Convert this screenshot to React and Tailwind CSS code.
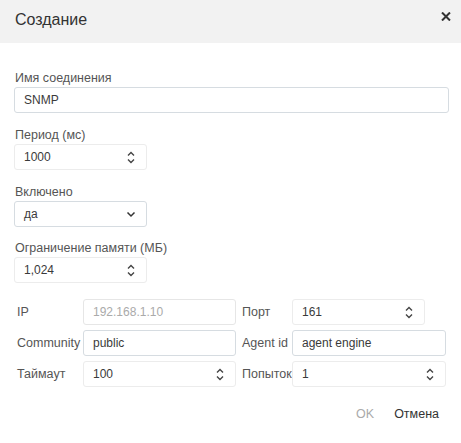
import React from "react";

const Spin = () => (
  <svg width="8" height="15" viewBox="0 0 8 15" className="shrink-0">
    <polyline points="1,5.5 4,2.5 7,5.5" fill="none" stroke="#444" strokeWidth="1.4" />
    <polyline points="1,9.5 4,12.5 7,9.5" fill="none" stroke="#444" strokeWidth="1.4" />
  </svg>
);

const Chevron = () => (
  <svg width="10" height="7" viewBox="0 0 10 7" className="shrink-0">
    <polyline points="1.5,1.5 5,5 8.5,1.5" fill="none" stroke="#333" strokeWidth="1.5" />
  </svg>
);

const Label = ({ children }) => (
  <div className="h-[16px] leading-[16px] text-[12.5px] text-[#555] pl-[1px] mb-[1px]">{children}</div>
);

const TextBox = ({ value, className = "" }) => (
  <div className={"h-[26px] flex items-center border border-[#d6dce1] rounded-[3px] pl-[9px] text-[12px] text-[#3a3a3a] " + className}>{value}</div>
);

const NumBox = ({ value, className = "" }) => (
  <div className={"h-[26px] flex items-center justify-between border border-[#ececec] rounded-[3px] pl-[9px] pr-[11px] text-[12px] text-[#3a3a3a] " + className}>
    <span>{value}</span>
    <Spin />
  </div>
);

export default function App() {
  return (
    <div className="w-[461px] h-[443px] bg-white font-['Liberation_Sans',Arial,sans-serif] overflow-hidden">
      <div className="h-[43px] bg-[#f2f2f2] flex items-start justify-between pl-[15px] pr-[10px] pt-[10px]">
        <div className="text-[16px] leading-[20px] text-[#333]">Создание</div>
        <svg width="10" height="9" viewBox="0 0 10 9" className="mt-[2px]">
          <line x1="1" y1="0.5" x2="9" y2="8.5" stroke="#333" strokeWidth="2" />
          <line x1="9" y1="0.5" x2="1" y2="8.5" stroke="#333" strokeWidth="2" />
        </svg>
      </div>
      <div className="px-[14px] pt-[27px]">
        <div>
          <Label>Имя соединения</Label>
          <TextBox value="SNMP" className="w-[435px] mt-[1px]" />
        </div>
        <div className="mt-[14px]">
          <Label>Период (мс)</Label>
          <NumBox value="1000" className="w-[133px]" />
        </div>
        <div className="mt-[14px]">
          <Label>Включено</Label>
          <div className="w-[133px] h-[26px] flex items-center justify-between border border-[#d6dce1] rounded-[3px] pl-[9px] pr-[10px] text-[12px] text-[#3a3a3a]">
            <span>да</span>
            <Chevron />
          </div>
        </div>
        <div className="mt-[13px]">
          <Label>Ограничение памяти (МБ)</Label>
          <NumBox value="1,024" className="w-[133px]" />
        </div>
        <div className="mt-[16px] grid grid-cols-[69px_153px_56px_154px] gap-y-[5px] text-[12.5px] text-[#555]">
          <div className="h-[26px] flex items-center pl-[3px]">IP</div>
          <div className="h-[26px] flex items-center border border-[#e6e6e6] rounded-[3px] pl-[9px] text-[12px] text-[#aaa]">192.168.1.10</div>
          <div className="h-[26px] flex items-center pl-[6px]">Порт</div>
          <div>
            <NumBox value="161" className="w-[133px]" />
          </div>

          <div className="h-[26px] flex items-center pl-[3px]">Community</div>
          <TextBox value="public" />
          <div className="h-[26px] flex items-center pl-[6px]">Agent id</div>
          <TextBox value="agent engine" />

          <div className="h-[26px] flex items-center pl-[3px]">Таймаут</div>
          <NumBox value="100" />
          <div className="h-[26px] flex items-center pl-[6px]">Попыток</div>
          <NumBox value="1" />
        </div>
        <div className="mt-[19px] flex justify-end gap-[20px] pr-[8px] text-[12.5px] leading-[16px]">
          <span className="text-[#aaa]">OK</span>
          <span className="text-[#333]">Отмена</span>
        </div>
      </div>
    </div>
  );
}
